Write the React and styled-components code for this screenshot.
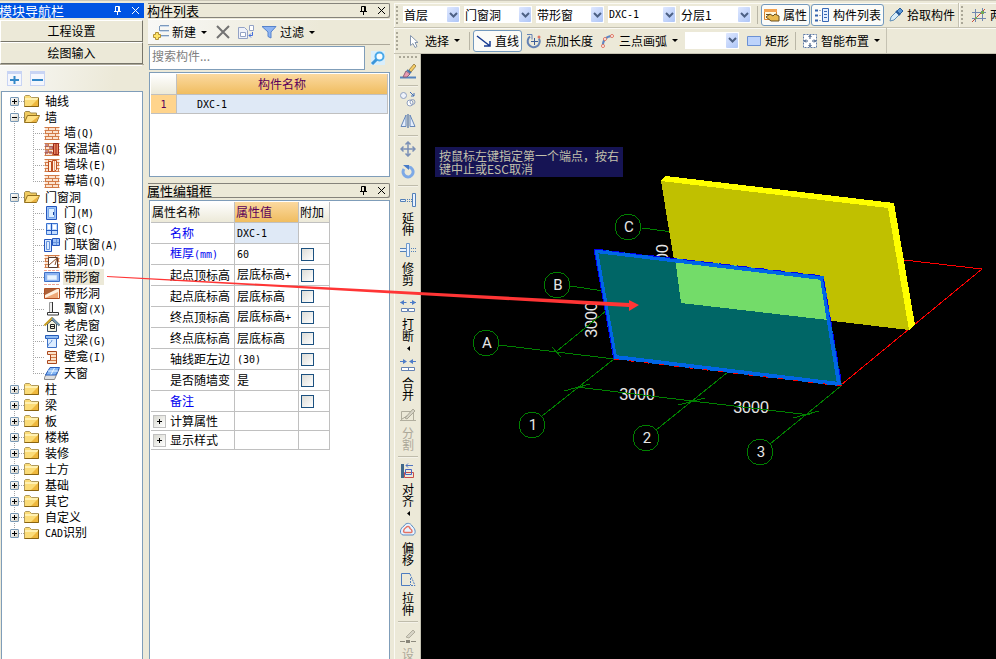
import React, { useState } from "react";
import styled, { createGlobalStyle, css } from "styled-components";

const GlobalStyle = createGlobalStyle`
	* {
		box-sizing: border-box;
	}

	body {
		margin: 0;
		overflow: hidden;
		background: #ece9d8;
	}

	body, button, input, select, table {
		font-family: "Noto Sans CJK SC", sans-serif;
		font-size: 12px;
		line-height: 16px;
		color: #000;
	}

	button {
		padding: 0;
		border: 0;
		background: none;
	}
`;

const Page = styled.div`
	position: relative;
	display: grid;
	grid-template-columns: 144px 242px minmax(0, 1fr);
	column-gap: 4px;
	height: 100vh;
	padding-top: 2px;
	border-top: 1px solid #cbc7b8;
	overflow: hidden;
`;

const Column = styled.div`
	display: flex;
	flex-direction: column;
	min-width: 0;
	min-height: 0;
`;

const Svg = styled.svg`
	display: block;
	flex: none;
`;

// latin letters are as wide as half a chinese character
const Latin = styled.span`
	font-family: "DejaVu Sans Mono", monospace;
	font-size: 10px;
`;

//panel headings

const TitleBar = styled.header`
	display: flex;
	align-items: center;
	flex: none;
	height: 15px;
	background: ${({ $active }) => ($active ? "#0054e3" : "#ece9d8")};
	color: ${({ $active }) => ($active ? "#fff" : "#000")};
	${({ $active }) =>
		!$active &&
		css`
			border-radius: 0 2px 2px 0;
			box-shadow: inset 0 1px #85837b, inset -1px -1px #85837b;
		`}
`;

const Title = styled.h2`
	flex: 1;
	margin: 0 0 0 -1px;
	font-size: 13px;
	font-weight: 400;
	line-height: 15px;
	white-space: nowrap;
`;

const TitleButton = styled.button`
	display: flex;
	justify-content: center;
	width: 18px;
	color: inherit;
`;

//left navigation

const WideButton = styled.button`
	flex: none;
	height: 22px;
	margin-right: 1px;
	border: 1px solid #fff;
	border-right-color: #77756a;
	border-bottom-color: #77756a;
	background: #ece9d8;
`;

const NavButtons = styled.div`
	display: flex;
	flex-direction: column;
	padding-top: 2px;
	border-bottom: 1px solid #aca899;
`;

const NavTools = styled.div`
	display: flex;
	align-items: center;
	gap: 8px;
	flex: none;
	height: 26px;
	margin-right: 2px;
	padding-left: 7px;
	border-top: 1px solid #fff;
	background: linear-gradient(100deg, #f8f8f6, #ece9d8 80%);
`;

const SquareButton = styled.button`
	width: 15px;
	height: 15px;
	border: 1px solid #c8d4f4;
	border-top-width: 3px;
	background: #f4f6fd;
`;

const TreeBox = styled.nav`
	flex: 1;
	min-height: 0;
	margin: 0 1px;
	padding-top: 1px;
	border: 1px solid #7f9db9;
	border-bottom: 0;
	background: #fff;
	overflow: hidden;
`;

const dots = css`
	background-image: repeating-linear-gradient(#a5a5a5 0 1px, #fff 1px 2px);
	background-repeat: no-repeat;
`;

const Tree = styled.ul`
	margin: 0;
	padding: 0;
	list-style: none;

	& > li {
		${dots}
		background-size: 1px 100%;
		background-position: 12px 0;
	}
	& > li:first-child {
		background-position: 12px 8px;
	}
	& > li:last-child {
		background-size: 1px 8px;
	}
`;

const Branch = styled.ul`
	margin: 0 0 0 31px;
	padding: 0;
	list-style: none;

	& > li {
		${dots}
		background-size: 1px 100%;
	}
	& > li:last-child {
		background-size: 1px 8px;
	}
`;

const TreeRow = styled.div`
	display: flex;
	align-items: center;
	height: 16px;
	padding-left: ${({ $top }) => ($top ? 8 : 0)}px;
	white-space: nowrap;
`;

const Dash = styled.span`
	width: ${({ $long }) => ($long ? 11 : 5)}px;
	height: 1px;
	background: repeating-linear-gradient(90deg, #a5a5a5 0 1px, #fff 1px 2px);
`;

const Expander = styled.button`
	display: flex;
	align-items: center;
	justify-content: center;
	width: 9px;
	height: 9px;
	border: 1px solid #7898b5;
	border-radius: 1px;
	background: linear-gradient(135deg, #fff, #d4d0c4);
`;

const TreeLabel = styled.a`
	margin-left: ${({ $top }) => ($top ? 4 : 3)}px;
	padding: 0 4px 0 1px;
	color: #000;
	text-decoration: none;
	background: ${({ $current }) => ($current ? "#ece9d8" : "transparent")};
`;

//component list

const ListTools = styled.div`
	display: flex;
	align-items: center;
	flex: none;
	height: 26px;
	margin-top: 1px;
	padding-left: 5px;
	gap: 7px;
	border-top: 1px solid #fff;
	border-bottom: 1px solid #aca899;
	background: linear-gradient(100deg, #f8f8f6, #ece9d8 70%);
`;

const PlainButton = styled.button`
	display: flex;
	align-items: center;
	gap: 3px;
	white-space: nowrap;
`;

const SearchRow = styled.form`
	display: flex;
	flex: none;
	height: 26px;
	margin: 0;
	padding: 1px 0 1px 1px;
`;

const SearchInput = styled.input`
	flex: 1;
	min-width: 0;
	padding: 0 2px 4px;
	border: 1px solid #7f9db9;
	border-radius: 0;
	outline: 0;

	&::placeholder {
		color: #808080;
	}
`;

const SearchButton = styled.button`
	display: flex;
	align-items: center;
	justify-content: center;
	width: 25px;
`;

const Sheet = styled.div`
	flex: ${({ $grow }) => ($grow ? "1" : "none")};
	height: ${({ $grow }) => ($grow ? "auto" : "105px")};
	min-height: 0;
	margin: ${({ $grow }) => ($grow ? "2px 0 0 1px" : "1px 0 6px 1px")};
	padding: 1px;
	border: 1px solid #7f9db9;
	border-bottom-width: ${({ $grow }) => ($grow ? 0 : 1)}px;
	background: #fff;
	overflow: hidden;
`;

const Table = styled.table`
	width: ${({ $fit }) => ($fit ? "179px" : "100%")};
	table-layout: fixed;
	border-collapse: separate;
	border-spacing: 0;
`;

const cell = css`
	height: ${({ $h }) => $h || 21}px;
	padding: 0 2px;
	border-right: 1px solid #c0c0c0;
	border-bottom: 1px solid #c0c0c0;
	font-weight: 400;
	line-height: 16px;
	white-space: nowrap;
	overflow: hidden;
`;

const Th = styled.th`
	${cell}
	padding: 0 1px;
	text-align: ${({ $center }) => ($center ? "center" : "left")};
	background: ${({ $gold }) =>
		$gold
			? "linear-gradient(#fbd9a0, #f0bd60)"
			: "linear-gradient(#fff, #ece9d8)"};
	color: ${({ $gold }) => ($gold ? "#5a005a" : "#000")};
`;

const RowNumber = styled.th`
	${cell}
	background: #ffd48c;
	color: #5a005a;
`;

const Td = styled.td`
	${cell}
	padding-left: ${({ $indent }) => $indent || 2}px;
	color: ${({ $blue }) => ($blue ? "#0000f0" : "#000")};
	background: ${({ $picked }) => ($picked ? "#dfe9f6" : "#fff")};
`;

const GroupCell = styled.div`
	display: flex;
	align-items: center;
	gap: 4px;
`;

const GroupButton = styled.button`
	display: flex;
	align-items: center;
	justify-content: center;
	width: 13px;
	height: 13px;
	border: 1px solid #c0c0c0;
	background: linear-gradient(135deg, #d8d8d0, #fff);
`;

const CheckBox = styled.input`
	appearance: none;
	display: block;
	width: 13px;
	height: 13px;
	margin: 0;
	border: 1px solid #1c5180;
	background: linear-gradient(135deg, #dcdcd7, #fff);

	&:checked {
		background: #21a121;
	}
`;

//drawing toolbars

const ToolRow = styled.div`
	display: flex;
	flex: none;
	height: ${({ $h }) => $h}px;
	border-bottom: 1px solid #c5c2b2;
	box-shadow: inset 0 1px #fbfaf4;
	overflow: hidden;
`;

const ToolBar = styled.div`
	display: flex;
	align-items: center;
	flex: none;
	gap: 1px;
	padding-left: 2px;
	border-right: 1px solid #c5c2b2;
	box-shadow: inset 1px 0 #fbfaf4;
`;

const Grip = styled.i`
	flex: none;
	width: ${({ $flat }) => ($flat ? 19 : 3)}px;
	height: ${({ $flat }) => ($flat ? 3 : 18)}px;
	margin: ${({ $flat }) => ($flat ? "2px 0 1px" : "0 3px 0 0")};
	background: radial-gradient(circle at 1px 1px, #aaa797 1px, transparent 1px)
		0 0 / 4px 4px;
`;

const Divider = styled.i`
	flex: none;
	width: 1px;
	height: 18px;
	margin: 0 2px;
	background: #b9b6a6;
`;

const ToolButton = styled.button`
	display: flex;
	align-items: center;
	flex: none;
	gap: 3px;
	height: 22px;
	padding: 0 ${({ $menu }) => ($menu ? 4 : 2)}px 0 2px;
	border: 1px solid ${({ $on }) => ($on ? "#7399bd" : "transparent")};
	border-radius: 3px;
	background: ${({ $on }) => ($on ? "#fbfbf8" : "transparent")};
	white-space: nowrap;
`;

const Combo = styled.span`
	display: grid;
	grid-template-columns: 1fr 13px;
	align-items: center;
	flex: none;
	width: ${({ $w }) => $w}px;
	height: 17px;
	margin-right: 3px;
	margin-bottom: 1px;
	background: #fff;
`;

const ComboSelect = styled.select`
	grid-area: 1 / 1 / 2 / 3;
	appearance: none;
	width: 100%;
	height: 17px;
	padding: 0 1px;
	border: 0;
	background: transparent;
	font-family: ${({ $latin }) =>
		$latin ? '"DejaVu Sans Mono", monospace' : "inherit"};
	font-size: ${({ $latin }) => ($latin ? 10 : 12)}px;
	outline: 0;
`;

const ComboArrow = styled.span`
	grid-area: 1 / 2 / 2 / 3;
	display: flex;
	align-items: center;
	justify-content: center;
	height: 15px;
	margin-right: 1px;
	border-radius: 1px;
	background: linear-gradient(135deg, #dfe8ff, #adc5f7);
	pointer-events: none;
`;

const Workspace = styled.div`
	display: flex;
	flex: 1;
	min-height: 0;
`;

const SideBar = styled.div`
	display: flex;
	flex-direction: column;
	align-items: center;
	flex: none;
	width: 27px;
	padding-left: 1px;
	border-left: 1px solid #fbfaf4;
	border-right: 1px solid #c5c2b2;
	overflow: hidden;
`;

const SideButton = styled.button`
	display: flex;
	flex-direction: column;
	align-items: center;
	flex: none;
	gap: 4px;
	margin-top: ${({ $spaced }) => ($spaced ? 6 : 0)}px;
	padding: ${({ $text }) => ($text ? "4px 0 2px" : "3px 0")};
	color: ${({ disabled }) => (disabled ? "#aca899" : "#000")};
`;

const SideText = styled.span`
	width: 12px;
	line-height: 12px;
	word-break: break-all;
`;

const SideRule = styled.i`
	flex: none;
	width: 20px;
	height: 2px;
	margin: 3px 0 1px;
	border-top: 1px solid #bfbcab;
	background: #f4f2e8;
`;

//drawing area

const Canvas = styled.main`
	position: relative;
	flex: 1;
	min-width: 0;
	background: #000;
	overflow: hidden;
`;

const Hint = styled.p`
	position: absolute;
	top: 93px;
	left: 14px;
	width: 188px;
	margin: 0;
	padding: 2px 4px;
	background: #161454;
	color: #c2c0ac;
	line-height: 13px;
`;

const Scene = styled.svg`
	display: block;
	width: 100%;
	height: 100%;
`;

const AxisText = styled.text`
	font-family: Roboto, sans-serif;
	font-size: 15px;
	fill: #e6e6e6;
	text-anchor: middle;
`;

const SizeText = styled(AxisText)`
	font-family: "Liberation Sans", sans-serif;
	font-size: 16px;
`;

const Pointer = styled.svg`
	position: absolute;
	top: 0;
	left: 0;
	pointer-events: none;
`;

const brick = (
	<>
		<path d="M1 2h14v12H1z" fill="#fbe3cf" />
		<path
			d="M.5 2.5h15M.5 5.5h15M.5 8.5h15M.5 11.5h15M.5 14.5h15M4.5 3v2M11.5 3v2M8.5 6v2M1.5 6v2M4.5 9v2M11.5 9v2M8.5 12v2M1.5 12v2M14.5 6v2M14.5 12v2"
			stroke="#d27b48"
		/>
	</>
);

const icons = {
	folder: (
		<>
			<path d="M.5 13.500V3.500l1-1h4l2 2h7v9z" fill="#fbdc78" stroke="#b09a5c" />
			<path d="M1 5h13v2H1z" fill="#fff0b0" />
			<path d="M7 13l7-7v7z" fill="#eeb83e" />
			<path d="M.5 13.500h14V5" stroke="#8a6410" />
		</>
	),
	open: (
		<>
			<path d="M.5 13V3.500l1-1h4l1 1.500h6v3" fill="#f0cb60" stroke="#a08a4c" />
			<path d="M.5 13.500l3-7h12l-3 7z" fill="#ffe082" stroke="#94701c" />
			<path d="M7 13l8-6-3 6z" fill="#eab240" />
		</>
	),
	brick,
	warm: (
		<>
			{brick}
			<path d="M1 3h3v3H1zM5 5h4v3H5zM1 9h3v4H1zM5 10h3v3H5z" fill="#9a5062" opacity=".6" />
			<path d="M9.5 2.5h5v11h-5z" fill="#e9855d" stroke="#9a281a" />
			<path d="M12 3v10" stroke="#9a281a" />
		</>
	),
	pier: (
		<>
			{brick}
			<path d="M4.5 4.5h3v10h-3zM8.5 3.500h4v9l-2 2h-2z" fill="#fff0df" stroke="#bd4e20" />
			<path d="M10.5 4v10" stroke="#e9a27a" />
		</>
	),
	door: (
		<>
			<path d="M2.5 1.5h10v13h-10z" fill="#9fc5f8" stroke="#2455bd" />
			<path d="M4.5 3.5h6v9h-6z" fill="#dff0ff" stroke="#78a6e9" />
			<path d="M9.5 7v3" stroke="#1742a0" />
		</>
	),
	window: (
		<>
			<path d="M2.5 2.5h11v11h-11z" fill="#c2dcff" stroke="#3971ce" />
			<path d="M7.5 2v12M2 9.5h12" stroke="#2559bd" />
			<path d="M4 4h2v4H4zM9 4h3v4H9z" fill="#fff" />
		</>
	),
	doorWindow: (
		<>
			<path d="M.5 2.5h7v12h-7z" fill="#dcebff" stroke="#2455bd" />
			<path d="M8.5 1.5h7v7h-7z" fill="#9fc1f7" stroke="#2455bd" />
			<path d="M12.5 2v6M9 5.5h6M2.5 4.5h3v8h-3z" stroke="#6794dc" />
		</>
	),
	hole: (
		<>
			{brick}
			<path d="M4.5 4.5h9v10h-9z" fill="#fff" stroke="#573e31" />
			<path d="M5 12l8-7-2 7" stroke="#8e4c24" />
		</>
	),
	stripWindow: (
		<>
			<path d="M0 1.5h16M0 15.5h16" stroke="#efa696" strokeDasharray="3 1" />
			<path d="M.5 3.5h15v9H.5z" fill="#8db4f2" stroke="#3c70c6" />
			<path d="M3.5 6.5h9v4h-9z" fill="#e8f4ff" stroke="#d0e4fc" />
		</>
	),
	stripHole: (
		<>
			<path d="M.5 3.5h15v10H.5z" fill="#fff0df" stroke="#ae4c21" />
			<path d="M1 10l12-6H1z" fill="#ad6138" />
			<path d="M1 13l13-6v6z" fill="#efa878" />
		</>
	),
	bay: (
		<>
			<path d="M5.5 1.5h3v10h-3z" fill="#eee" stroke="#999" />
			<path d="M8.5 1v10.5h-5v2.500h11v-2.500h-6" stroke="#333" />
		</>
	),
	dormer: (
		<>
			<path d="M3.5 7v7.5h9V7L8 3z" fill="#f4f4df" stroke="#364a62" />
			<path d="M.5 8.5L8 1l7.5 7.5" stroke="#c79c21" strokeWidth="2" />
			<path d="M8 1l7.5 7.5" stroke="#6c93b7" strokeWidth="2" />
			<path d="M6.500 7.500h4v4h-4zM7 9.500h3" stroke="#222" />
		</>
	),
	lintel: (
		<>
			<path d="M1.5 2.5h13v3h-13z" fill="#8fbcf4" stroke="#245bb8" />
			<path d="M3.5 5.5h9v9h-9z" fill="#dcecff" stroke="#3c70c6" />
			<path d="M4 13c1-4 3-2 4-6" stroke="#5c8cd6" />
		</>
	),
	niche: (
		<>
			<path d="M3.5 2.5h9v12h-9v-3h3v-6h-3z" fill="#fbe0c8" stroke="#a9471d" />
			<path d="M7 5.5h5M7 8.5h5M7 11.5h5" stroke="#d27b48" />
		</>
	),
	skylight: (
		<>
			<path d="M4 6L.5 12.5v2h10L15 4z" fill="#dedede" stroke="#888" />
			<path d="M6 2.5h9.5L12 10H1.500z" fill="#85b7f5" stroke="#285ebd" />
			<path d="M10.5 3L7 9.500M4 6h10" stroke="#edf7ff" />
		</>
	),
	add: (
		<>
			<path d="M7 1.5h9M7 6.5h9M7 11.5h9M6.5 2v5" stroke="#7b99bd" />
			<path d="M7 2.5h9M7 7.5h9M7 12.5h9" stroke="#c9d8ea" />
			<path d="M2.5 8.5h3v2h2v3h-2v2h-3v-2h-2v-3h2z" fill="#ffe468" stroke="#b39035" />
		</>
	),
	remove: <path d="M2 2l12 12M14 2L2 14" stroke="#737373" strokeWidth="2" />,
	copyTo: (
		<>
			<path d="M.5 3.5h6l3 3v8h-9z" fill="#eef1fa" stroke="#93a2c5" />
			<path d="M2.5 8.5h5v4h-5z" fill="#fff" stroke="#93a2c5" />
			<path d="M11.5 1.5h4v5h-4z" fill="#fff" stroke="#93a2c5" />
			<path d="M14.5 8v3.500H11M13 9.500l-2 2 2 2" stroke="#456fdb" />
		</>
	),
	filter: (
		<path d="M1 2.5h14L10 8v6l-3-1.5V8z" fill="#8eb4f2" stroke="#5683cc" />
	),
	search: (
		<>
			<path d="M1 1h14v14H1z" fill="#d9eefb" />
			<circle cx="9.5" cy="6.5" r="4" fill="#f6fcff" stroke="#4aa8e8" strokeWidth="2" />
			<path d="M6.5 9.5L2 14" stroke="#3c96db" strokeWidth="3" />
		</>
	),
	properties: (
		<>
			<path d="M.5 2.5h12v10H.5z" fill="#fff7dd" stroke="#db852e" />
			<path d="M0 3.5h13" stroke="#f2a351" strokeWidth="3" />
			<path d="M2 10l4-3 3 2 2-2 4 2v5H7z" fill="#e9b94f" stroke="#684e20" />
			<path d="M2 7.500h4" stroke="#684e20" />
		</>
	),
	list: (
		<>
			<path d="M1 3.5h3M1 8.5h3M1 13.5h3" stroke="#3362ad" strokeWidth="2" />
			<path d="M5 3.5h2M5 8.5h2M5 13.5h2" stroke="#a4aabc" />
			<path d="M8.5 1.5h6v13h-6z" fill="#e5efff" stroke="#3868b4" />
			<path d="M10 4.5h3M10 7.5h3M10 10.5h3" stroke="#3868b4" />
		</>
	),
	dropper: (
		<>
			<path d="M2 14l1-4 5-5 3 3-5 5z" fill="#d8edfa" stroke="#5f8db5" />
			<path d="M8 4l4 4" stroke="#275c9c" strokeWidth="2" />
			<path d="M9 4l3-3 3 3-3 3z" fill="#5c98d6" stroke="#275c9c" />
		</>
	),
	axes: (
		<>
			<path d="M4.5 2v13M11.5 1v13M1 5.5h14M1 11.5h14" stroke="#7188b0" />
			<path d="M1 15L14 2" stroke="#c54b3d" />
			<path d="M4 10h2v2H4zM10 4h3v3h-3z" fill="#72aa56" />
		</>
	),
	cursor: (
		<path d="M4.5 2.5v10l2.500-2 2 4 2-1-2-4h3z" fill="#fff" stroke="#8596ae" />
	),
	line: (
		<path d="M1 3l13 10M14 8v5H8" stroke="#173b91" strokeWidth="1.5" />
	),
	pointLength: (
		<>
			<path d="M4 3.5a6 6 0 1 0 9 2" stroke="#6482b4" strokeWidth="2" />
			<path d="M1 1.500h5v5" stroke="#6482b4" />
			<path d="M8.5 5v7M5 8.5h7" stroke="#3c5d98" />
			<circle cx="13" cy="4" r="1.5" fill="#df7664" />
		</>
	),
	arc: (
		<>
			<path d="M3 14C2 8 6 3 12 3" stroke="#5f86c2" strokeWidth="2" />
			<circle cx="3" cy="13" r="1.5" fill="#fff" stroke="#e17560" />
			<circle cx="5" cy="6" r="1.5" fill="#fff" stroke="#e17560" />
			<circle cx="12" cy="3" r="1.5" fill="#fff" stroke="#e17560" />
		</>
	),
	rect: <path d="M1.5 3.5h13v9h-13z" fill="#bdd3fb" stroke="#6b91d4" />,
	smart: (
		<>
			<path d="M1.5 1.5h13v13h-13z" fill="#fff" stroke="#5f7ca8" strokeDasharray="2 1" />
			<path
				d="M8 2v4M8 10v4M2 8h4M10 8h4M6.5 4L8 2.5 9.5 4M6.5 12L8 13.5 9.5 12M4 6.5L2.5 8 4 9.5M12 6.5L13.5 8 12 9.5"
				stroke="#35527e"
			/>
		</>
	),
	brush: (
		<>
			<path d="M0 14.500h16" stroke="#5684bf" strokeWidth="2" />
			<path d="M9 7l5-6 2 2-5 6z" fill="#f6cd65" stroke="#a1884e" />
			<path d="M6 8l4 3-3 3H3z" fill="#e99bb2" stroke="#8d6278" />
			<path d="M7 7l4 3" stroke="#4875ae" strokeWidth="2" />
		</>
	),
	duplicate: (
		<>
			<circle cx="3.5" cy="4.5" r="3" fill="#eef2fa" stroke="#90a0bf" />
			<circle cx="10" cy="12" r="3" fill="#fff" stroke="#90a0bf" />
			<circle cx="12.5" cy="11" r="2.5" stroke="#90a0bf" />
			<path d="M10 1l4 4M14 2v3h-3" stroke="#416fb5" />
		</>
	),
	mirror: (
		<>
			<path d="M6 2v11.5H1zM10 2v11.5h5z" fill="#e4edfb" stroke="#6788b9" />
			<path d="M8 1v14" stroke="#315899" />
		</>
	),
	move: (
		<path
			d="M8 1v14M1 8h14M5.5 3.5L8 1l2.5 2.5M5.5 12.5L8 15l2.5-2.5M3.5 5.5L1 8l2.5 2.5M12.5 5.5L15 8l-2.5 2.5"
			stroke="#7b90b6"
			strokeWidth="1.5"
		/>
	),
	rotate: (
		<>
			<path d="M4 6a5 5 0 1 0 5-2" stroke="#7da9e6" strokeWidth="3" />
			<path d="M3 2h6v5z" fill="#477bc8" />
		</>
	),
	extend: (
		<>
			<path d="M.5 7.5h5v2h-5zM12.5 1.5h3v13h-3z" fill="#eaf3ff" stroke="#5380b8" />
			<path d="M7 7.5h5M7 9.5h5" stroke="#5380b8" strokeDasharray="1 1" />
		</>
	),
	trim: (
		<>
			<path d="M0 6.5h7v3H0" fill="#eaf3ff" stroke="#5380b8" />
			<path d="M6.5 1.5h3v13h-3z" fill="#eaf3ff" stroke="#6d98cb" />
			<path d="M11 6.5h5M11 9.5h5" stroke="#5380b8" strokeDasharray="1 1" />
		</>
	),
	split: (
		<>
			<path d="M.5 4.5h6M10 4.5h6" stroke="#4d7cc8" />
			<path d="M4 2v5L0 4.5zM12 2v5l4-2.5z" fill="#4d7cc8" />
			<path d="M1.5 10.5h6v3h-6zM8.5 10.5h6v3h-6z" fill="#fff" stroke="#6583b4" />
		</>
	),
	merge: (
		<>
			<path d="M0 4.5h6M10 4.5h6" stroke="#4d7cc8" />
			<path d="M3 2v5l4-2.5zM13 2v5L9 4.5z" fill="#4d7cc8" />
			<path d="M1.5 10.5h13v3h-13zM8.5 10.5v3" fill="#fff" stroke="#6583b4" />
		</>
	),
	cut: (
		<>
			<path d="M1.5 4.5h12v9h-12zM0 13.5h16" stroke="#b1ae9e" />
			<path d="M5 11l8-9 2 2-8 8zM2 12l5-3" fill="#d6d3c5" stroke="#aaa797" />
		</>
	),
	align: (
		<>
			<path d="M2.5 1v14" stroke="#416889" strokeWidth="3" />
			<path d="M4.5 9.5h9v5h-9z" stroke="#ca4c48" />
			<path d="M5.5 6.5h6v5h-6z" stroke="#4766c3" />
			<path d="M6 2.5h7M8 .5l-2 2 2 2" stroke="#5175c0" />
		</>
	),
	offset: (
		<>
			<path d="M4 4c2-4 7-3 8 0 4 3 4 8 1 9H3c-4-1-3-7 1-9z" fill="#e9f3ff" stroke="#5b8bc0" />
			<path d="M6 5.5c1-2 4-1 4 1 3 2 2 4 1 4H5c-2 0-2-3 1-5z" stroke="#e47363" strokeWidth="1.5" />
		</>
	),
	stretch: (
		<>
			<path d="M10 1.5H1.5v12H8" stroke="#4d7cc0" />
			<path d="M10 2l5 11.5M8 13.5h7M10.500 6v7" stroke="#4d7cc0" strokeDasharray="2 1" />
		</>
	),
	node: (
		<>
			<path d="M0 13.5h5M11 13.5h5" stroke="#8c8a7d" />
			<path d="M6 12h4v3H6z" fill="#88867a" />
			<path d="M6 9l7-7 2 2-6 6z" fill="#d6d3c5" stroke="#b1ae9e" />
		</>
	),
};

function Icon({ name }) {
	return (
		<Svg width="16" height="16" viewBox="0 0 16 16" fill="none" aria-hidden="true">
			{icons[name]}
		</Svg>
	);
}

function Caret({ left }) {
	return (
		<Svg
			width={left ? 4 : 9}
			height="5"
			viewBox={left ? "0 0 4 5" : "0 0 9 5"}
			aria-hidden="true"
		>
			<path d={left ? "M4 0v5L1 2.5z" : "M2 1h6L5 4z"} />
		</Svg>
	);
}

function Sign({ open }) {
	return (
		<Svg width="7" height="7" viewBox="0 0 7 7" stroke="#000" aria-hidden="true">
			<path d={open ? "M1 3.5h5" : "M1 3.5h5M3.5 1v5"} />
		</Svg>
	);
}

function PanelTitle({ children, active }) {
	return (
		<TitleBar $active={active}>
			<Title>{children}</Title>
			<TitleButton type="button" aria-label="固定">
				<Svg width="9" height="9" viewBox="0 0 9 9" fill="none" stroke="currentColor">
					<path d="M2.5 5V.5h4V5M5.5 1v4M1 5.5h7M4.5 6v3" />
				</Svg>
			</TitleButton>
			<TitleButton type="button" aria-label="关闭">
				<Svg width="9" height="9" viewBox="0 0 9 9" fill="none" stroke="currentColor">
					<path d="M1 1l7 7M8 1L1 8" />
				</Svg>
			</TitleButton>
		</TitleBar>
	);
}

const treeData = [
	{ text: "轴线" },
	{
		text: "墙",
		items: [
			["brick", "墙", "(Q)"],
			["warm", "保温墙", "(Q)"],
			["pier", "墙垛", "(E)"],
			["brick", "幕墙", "(Q)"],
		],
	},
	{
		text: "门窗洞",
		items: [
			["door", "门", "(M)"],
			["window", "窗", "(C)"],
			["doorWindow", "门联窗", "(A)"],
			["hole", "墙洞", "(D)"],
			["stripWindow", "带形窗"],
			["stripHole", "带形洞"],
			["bay", "飘窗", "(X)"],
			["dormer", "老虎窗"],
			["lintel", "过梁", "(G)"],
			["niche", "壁龛", "(I)"],
			["skylight", "天窗"],
		],
	},
	{ text: "柱" },
	{ text: "梁" },
	{ text: "板" },
	{ text: "楼梯" },
	{ text: "装修" },
	{ text: "土方" },
	{ text: "基础" },
	{ text: "其它" },
	{ text: "自定义" },
	{ latin: "CAD", text: "识别" },
];

function TreeNode({ node }) {
	const [open, setOpen] = useState(Boolean(node.items));
	return (
		<li>
			<TreeRow $top>
				<Expander
					type="button"
					aria-label={node.text}
					aria-expanded={open}
					onClick={() => setOpen(!open)}
				>
					<Sign open={open} />
				</Expander>
				<Dash />
				<Icon name={open ? "open" : "folder"} />
				<TreeLabel href="#" $top>
					{node.latin && <Latin>{node.latin}</Latin>}
					{node.text}
				</TreeLabel>
			</TreeRow>
			{open && node.items && (
				<Branch>
					{node.items.map(([icon, text, key]) => (
						<li key={text}>
							<TreeRow>
								<Dash $long />
								<Icon name={icon} />
								<TreeLabel href="#" $current={text === "带形窗"}>
									{text}
									{key && <Latin>{key}</Latin>}
								</TreeLabel>
							</TreeRow>
						</li>
					))}
				</Branch>
			)}
		</li>
	);
}

function Navigator() {
	return (
		<Column>
			<PanelTitle active>模块导航栏</PanelTitle>
			<NavButtons>
				<WideButton type="button">工程设置</WideButton>
				<WideButton type="button">绘图输入</WideButton>
			</NavButtons>
			<NavTools>
				<SquareButton type="button" aria-label="全部展开">
					<Svg width="13" height="11" viewBox="0 0 13 11" stroke="#3388c8" strokeWidth="2">
						<path d="M2 6h9M6.5 2v8" />
					</Svg>
				</SquareButton>
				<SquareButton type="button" aria-label="全部折叠">
					<Svg width="13" height="11" viewBox="0 0 13 11" stroke="#3388c8" strokeWidth="2">
						<path d="M1 6h11" />
					</Svg>
				</SquareButton>
			</NavTools>
			<TreeBox>
				<Tree>
					{treeData.map((node) => (
						<TreeNode key={node.text} node={node} />
					))}
				</Tree>
			</TreeBox>
		</Column>
	);
}

const properties = [
	{ name: "名称", latinValue: "DXC-1", blue: true, picked: true, plain: true },
	{ name: "框厚", unit: "(mm)", latinValue: "60", blue: true },
	{ name: "起点顶标高", value: "层底标高", tail: "+" },
	{ name: "起点底标高", value: "层底标高" },
	{ name: "终点顶标高", value: "层底标高", tail: "+" },
	{ name: "终点底标高", value: "层底标高" },
	{ name: "轴线距左边", latinValue: "(30)" },
	{ name: "是否随墙变", value: "是" },
	{ name: "备注", blue: true },
];

function Components() {
	return (
		<Column>
			<PanelTitle>构件列表</PanelTitle>
			<ListTools>
				<PlainButton type="button">
					<Icon name="add" />
					<span>新建</span>
					<Caret />
				</PlainButton>
				<PlainButton type="button" aria-label="删除">
					<Icon name="remove" />
				</PlainButton>
				<PlainButton type="button" aria-label="复制">
					<Icon name="copyTo" />
				</PlainButton>
				<PlainButton type="button">
					<Icon name="filter" />
					<span>过滤</span>
					<Caret />
				</PlainButton>
			</ListTools>
			<SearchRow onSubmit={(e) => e.preventDefault()}>
				<SearchInput placeholder="搜索构件..." aria-label="搜索构件" />
				<SearchButton type="submit" aria-label="搜索">
					<Icon name="search" />
				</SearchButton>
			</SearchRow>
			<Sheet>
				<Table>
					<colgroup>
						<col width="26" />
						<col />
					</colgroup>
					<thead>
						<tr>
							<Th />
							<Th $gold $center>构件名称</Th>
						</tr>
					</thead>
					<tbody>
						<tr>
							<RowNumber $h={19}>
								<Latin>1</Latin>
							</RowNumber>
							<Td $h={19} $picked $indent={20}>
								<Latin>DXC-1</Latin>
							</Td>
						</tr>
					</tbody>
				</Table>
			</Sheet>
			<PanelTitle>属性编辑框</PanelTitle>
			<Sheet $grow>
				<Table $fit>
					<colgroup>
						<col width="84" />
						<col width="64" />
						<col width="31" />
					</colgroup>
					<thead>
						<tr>
							<Th>属性名称</Th>
							<Th $gold>属性值</Th>
							<Th>附加</Th>
						</tr>
					</thead>
					<tbody>
						{properties.map((row) => (
							<tr key={row.name}>
								<Td $blue={row.blue} $indent={19}>
									{row.name}
									{row.unit && <Latin>{row.unit}</Latin>}
								</Td>
								<Td $picked={row.picked}>
									{row.latinValue ? <Latin>{row.latinValue}</Latin> : row.value}
									{row.tail && <Latin>{row.tail}</Latin>}
								</Td>
								<Td>
									{!row.plain && (
										<CheckBox type="checkbox" aria-label={`附加 ${row.name}`} />
									)}
								</Td>
							</tr>
						))}
						{["计算属性", "显示样式"].map((name) => (
							<tr key={name}>
								<Td $h={19}>
									<GroupCell>
										<GroupButton type="button" aria-label={name}>
											<Sign />
										</GroupButton>
										{name}
									</GroupCell>
								</Td>
								<Td $h={19} />
								<Td $h={19} />
							</tr>
						))}
					</tbody>
				</Table>
			</Sheet>
		</Column>
	);
}

function Picker({ label, value = "", width, latin }) {
	return (
		<Combo $w={width}>
			<ComboSelect aria-label={label} $latin={latin}>
				<option>{value}</option>
			</ComboSelect>
			<ComboArrow>
				<Svg width="9" height="6" viewBox="0 0 9 6" fill="none" stroke="#4d6185" strokeWidth="2">
					<path d="M1 1l3.5 3.5L8 1" />
				</Svg>
			</ComboArrow>
		</Combo>
	);
}

function Tool({ icon, text, on, menu }) {
	return (
		<ToolButton type="button" $on={on} $menu={menu}>
			<Icon name={icon} />
			<span>{text}</span>
			{menu && <Caret />}
		</ToolButton>
	);
}

function SideTool({ icon, label, text, menu, spaced, disabled }) {
	return (
		<SideButton
			type="button"
			aria-label={label || text}
			disabled={disabled}
			$text={Boolean(text)}
			$spaced={spaced}
		>
			<Icon name={icon} />
			{text && <SideText>{text}</SideText>}
			{menu && <Caret left />}
		</SideButton>
	);
}

// twelve-sided bubble round an axis name
const bubble = (cx, cy) =>
	Array.from({ length: 12 }, (_, i) => {
		const a = (i * Math.PI) / 6;
		return `${(cx + 13 * Math.cos(a)).toFixed(1)},${(cy + 13 * Math.sin(a)).toFixed(1)}`;
	}).join(" ");

const axes = [
	["A", 486, 343],
	["B", 557, 285],
	["C", 628, 227],
	["1", 532, 425],
	["2", 646, 438],
	["3", 760, 452],
];

function Drawing() {
	return (
		<Canvas>
			<Scene
				viewBox="421 54 575 605"
				preserveAspectRatio="xMinYMin meet"
				role="img"
				aria-label="三维视图"
			>
				<SizeText transform="translate(597 320) rotate(-90)">3000</SizeText>
				<SizeText transform="translate(668 262) rotate(-90)">3000</SizeText>
				<SizeText x="637" y="400">3000</SizeText>
				<SizeText x="751" y="413">3000</SizeText>
				<g stroke="#008000" fill="none" shapeRendering="crispEdges">
					<path d="M499 345l58 7 57 7M557 351l55-45M552 347l9 10M570 286l34 5M642 228l30 4" />
					<path d="M542 416l72-57M656 430l72-58M770 444l71-58" />
					<path d="M577 387l115 14 118 14M564 391l26-7M678 405l27-7M793 418l26-7" />
					{axes.map(([name, x, y]) => (
						<polygon key={name} points={bubble(x, y)} />
					))}
				</g>
				{axes.map(([name, x, y]) => (
					<AxisText key={name} x={x + 1} y={y + 5}>
						{name}
					</AxisText>
				))}
				<g shapeRendering="crispEdges">
					<path d="M904 260l78 9-141 116" fill="none" stroke="#f00" />
					<path d="M660 181l6-5 228 27 21 122-6 5z" fill="#ff0" />
					<path d="M661 181l227 27 21 122-228-27z" fill="#c0c000" />
					<path d="M594 249l229 27 19 110-228-28z" fill="#006666" />
					<path d="M675 258l146 18 7 44-147-17z" fill="#73dc69" />
					<path d="M596 251l226 27 17 106-224-27z" fill="none" stroke="#0066e6" strokeWidth="4" />
					<path d="M594 249l229 27 19 110" fill="none" stroke="#0000f0" strokeDasharray="12 6" />
					<path d="M594 249l20 110" fill="none" stroke="#0000f0" />
					<path d="M614 359l228 27" fill="none" stroke="#f00" strokeDasharray="5 10" />
				</g>
			</Scene>
			<Hint>按鼠标左键指定第一个端点，按右键中止或ESC取消</Hint>
		</Canvas>
	);
}

function App() {
	return (
		<>
			<GlobalStyle />
			<Page>
				<Navigator />
				<Components />
				<Column>
					<ToolRow $h={25}>
						<ToolBar>
							<Grip />
							<Picker label="楼层" value="首层" width={57} />
							<Picker label="类型" value="门窗洞" width={68} />
							<Picker label="构件类型" value="带形窗" width={68} />
							<Picker label="构件" value="DXC-1" width={68} latin />
							<Picker label="分层" value="分层1" width={71} />
							<Divider />
							<Tool icon="properties" text="属性" on />
							<Tool icon="list" text="构件列表" on />
							<Tool icon="dropper" text="拾取构件" />
						</ToolBar>
						<ToolBar>
							<Grip />
							<Tool icon="axes" text="两点" />
						</ToolBar>
					</ToolRow>
					<ToolRow $h={26}>
						<ToolBar>
							<Grip />
							<Tool icon="cursor" text="选择" menu />
							<Divider />
							<Tool icon="line" text="直线" on />
							<Tool icon="pointLength" text="点加长度" />
							<Tool icon="arc" text="三点画弧" menu />
							<Picker label="弧类型" width={54} />
							<Tool icon="rect" text="矩形" />
							<Divider />
							<Tool icon="smart" text="智能布置" menu />
						</ToolBar>
					</ToolRow>
					<Workspace>
						<SideBar>
							<Grip $flat />
							<SideTool icon="brush" label="删除" />
							<SideRule />
							<SideTool icon="duplicate" label="复制" />
							<SideTool icon="mirror" label="镜像" />
							<SideRule />
							<SideTool icon="move" label="移动" />
							<SideTool icon="rotate" label="旋转" />
							<SideRule />
							<SideTool icon="extend" text="延伸" />
							<SideTool icon="trim" text="修剪" />
							<SideTool icon="split" text="打断" menu spaced />
							<SideTool icon="merge" text="合并" />
							<SideTool icon="cut" text="分割" disabled />
							<SideRule />
							<SideTool icon="align" text="对齐" menu />
							<SideTool icon="offset" text="偏移" />
							<SideTool icon="stretch" text="拉伸" />
							<SideRule />
							<SideTool icon="node" text="设置" disabled />
						</SideBar>
						<Drawing />
					</Workspace>
				</Column>
				<Pointer width="640" height="320" viewBox="0 1 640 320" aria-hidden="true">
					<path d="M107 276l522 27v-3l10 5-10 6v-4L107 277z" fill="#ff3535" />
				</Pointer>
			</Page>
		</>
	);
}

export default App;
